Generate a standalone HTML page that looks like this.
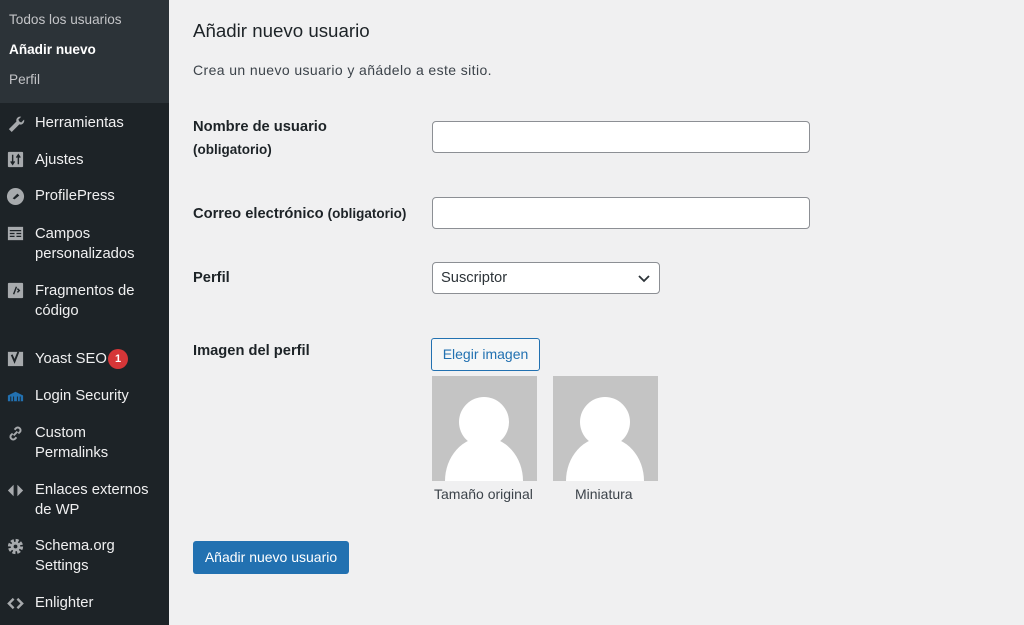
<!DOCTYPE html>
<html><head><meta charset="utf-8"><style>
*{margin:0;padding:0;box-sizing:border-box}
body{width:1024px;height:625px;overflow:hidden;background:#f0f0f1;font-family:"Liberation Sans",sans-serif;position:relative;color:#1d2327}
#sb{position:absolute;left:0;top:0;width:169px;height:625px;background:#1d2327}
#sub{position:absolute;left:0;top:0;width:169px;height:103px;background:#2c3338}
.s{position:absolute;left:9px;font-size:13.6px;color:#c3c4c7}
.m{position:absolute;left:35px;font-size:14.8px;color:#f0f0f1;line-height:20px}
.i{position:absolute;left:6px;width:19px;height:19px}
.a{position:absolute}
.lbl{position:absolute;left:193px;font-size:14.7px;font-weight:bold;color:#1d2327}
.inp{position:absolute;background:#fff;border:1px solid #8c8f94;border-radius:4px}
</style></head><body>
<div id="sb"><div id="sub"></div>
<div class="s" style="top:12px">Todos los usuarios</div>
<div class="s" style="top:42px;color:#fff;font-weight:bold">Añadir nuevo</div>
<div class="s" style="top:72px">Perfil</div>

<svg class="i" style="top:113px" viewBox="0 0 20 20"><path d="M3 17l8-8a4 4 0 015-5l-3 3 1 2 2 1 3-3a4 4 0 01-5 5l-8 8z" fill="#a7aaad"/></svg>
<div class="m" style="top:113px">Herramientas</div>
<svg class="i" style="top:150px" viewBox="0 0 20 20"><rect x="2" y="2" width="16" height="16" rx="1" fill="#a7aaad"/><path d="M7 5v10M5 12l2 3 2-3M13 15V5M11 8l2-3 2 3" stroke="#1d2327" stroke-width="1.5" fill="none"/></svg>
<div class="m" style="top:150px">Ajustes</div>
<svg class="i" style="top:187px" viewBox="0 0 20 20"><circle cx="10" cy="10" r="9" fill="#a7aaad"/><path d="M7 12l5-5 2 2-5 4z" fill="#1d2327"/></svg>
<div class="m" style="top:186px">ProfilePress</div>
<svg class="i" style="top:224px" viewBox="0 0 20 20"><rect x="2" y="3" width="16" height="14" fill="#a7aaad"/><path d="M4 7h12M4 10h5M11 10h5M4 13h5M11 13h5" stroke="#1d2327" stroke-width="1.3"/></svg>
<div class="m" style="top:224px">Campos<br>personalizados</div>
<svg class="i" style="top:281px" viewBox="0 0 20 20"><rect x="2" y="2" width="16" height="16" rx="1" fill="#a7aaad"/><path d="M8 14l3-8M12 8l2 2-2 2" stroke="#1d2327" stroke-width="1.5" fill="none"/></svg>
<div class="m" style="top:281px">Fragmentos de<br>código</div>
<svg class="i" style="top:349px" viewBox="0 0 20 20"><path d="M2 3h16v15H2z" fill="#a7aaad"/><path d="M6 6l3 7 4-10" stroke="#1d2327" stroke-width="2" fill="none"/></svg>
<div class="m" style="top:349px">Yoast SEO</div>
<div class="a" style="left:108px;top:349px;width:20px;height:20px;border-radius:10px;background:#d63638;color:#fff;font-size:11px;text-align:center;line-height:20px;font-weight:bold">1</div>
<svg class="i" style="top:387px" viewBox="0 0 20 20"><path d="M2 9l8-4 8 4v6H2z" fill="#2271b1"/><path d="M5 10v5M8 10v5M12 10v5M15 10v5" stroke="#1d2327"/></svg>
<div class="m" style="top:386px">Login Security</div>
<svg class="i" style="top:424px" viewBox="0 0 20 20"><path d="M8 12l4-4M9 6l2-2a3 3 0 014 4l-2 2M11 14l-2 2a3 3 0 01-4-4l2-2" stroke="#a7aaad" stroke-width="2" fill="none"/></svg>
<div class="m" style="top:423px">Custom<br>Permalinks</div>
<svg class="i" style="top:481px" viewBox="0 0 20 20"><path d="M8 4L2 10l6 6zM12 4l6 6-6 6z" fill="#a7aaad"/></svg>
<div class="m" style="top:480px">Enlaces externos<br>de WP</div>
<svg class="i" style="top:537px" viewBox="0 0 20 20"><circle cx="10" cy="10" r="6" fill="none" stroke="#a7aaad" stroke-width="4" stroke-dasharray="3 1.7"/><circle cx="10" cy="10" r="5" fill="#a7aaad"/><circle cx="10" cy="10" r="2" fill="#1d2327"/></svg>
<div class="m" style="top:536px">Schema.org<br>Settings</div>
<svg class="i" style="top:594px" viewBox="0 0 20 20"><path d="M8 5l-5 5 5 5M12 5l5 5-5 5" stroke="#a7aaad" stroke-width="2.5" fill="none"/></svg>
<div class="m" style="top:593px">Enlighter</div>
</div>

<div class="a" style="left:193px;top:20px;font-size:18.7px;color:#1d2327">Añadir nuevo usuario</div>
<div class="a" style="left:193px;top:62px;font-size:14px;letter-spacing:.4px;color:#3c434a">Crea un nuevo usuario y añádelo a este sitio.</div>

<div class="lbl" style="top:119px">Nombre de usuario</div>
<div class="lbl" style="top:142px;font-size:13.5px">(obligatorio)</div>
<div class="inp" style="left:432px;top:121px;width:378px;height:32px"></div>

<div class="lbl" style="top:206px">Correo electrónico <span style="font-size:13.5px">(obligatorio)</span></div>
<div class="inp" style="left:432px;top:197px;width:378px;height:32px"></div>

<div class="lbl" style="top:270px">Perfil</div>
<div class="inp" style="left:432px;top:262px;width:228px;height:32px"><span style="position:absolute;left:8px;top:7px;font-size:14.7px;color:#2c3338">Suscriptor</span><svg style="position:absolute;right:9px;top:10px" width="12" height="10" viewBox="0 0 12 10"><path d="M1 3l5 5 5-5" stroke="#2c3338" stroke-width="1.8" fill="none"/></svg></div>

<div class="lbl" style="top:343px">Imagen del perfil</div>
<div class="a" style="left:431px;top:338px;width:109px;height:33px;border:1px solid #2271b1;border-radius:3px;background:#f6f7f7;color:#2271b1;font-size:14px;text-align:center;line-height:31px">Elegir imagen</div>

<svg class="a" style="left:432px;top:376px" width="105" height="105" viewBox="0 0 105 105"><rect width="105" height="105" fill="#c4c4c4"/><circle cx="52" cy="46" r="25" fill="#fff"/><path d="M13 105a39 44 0 0178 0z" fill="#fff"/></svg>
<svg class="a" style="left:553px;top:376px" width="105" height="105" viewBox="0 0 105 105"><rect width="105" height="105" fill="#c4c4c4"/><circle cx="52" cy="46" r="25" fill="#fff"/><path d="M13 105a39 44 0 0178 0z" fill="#fff"/></svg>
<div class="a" style="left:434px;top:486px;font-size:14px;color:#3c434a">Tamaño original</div>
<div class="a" style="left:575px;top:486px;font-size:14px;color:#3c434a">Miniatura</div>

<div class="a" style="left:193px;top:541px;width:156px;height:33px;background:#2271b1;border-radius:3px;color:#fff;font-size:14px;text-align:center;line-height:33px">Añadir nuevo usuario</div>
</body></html>
